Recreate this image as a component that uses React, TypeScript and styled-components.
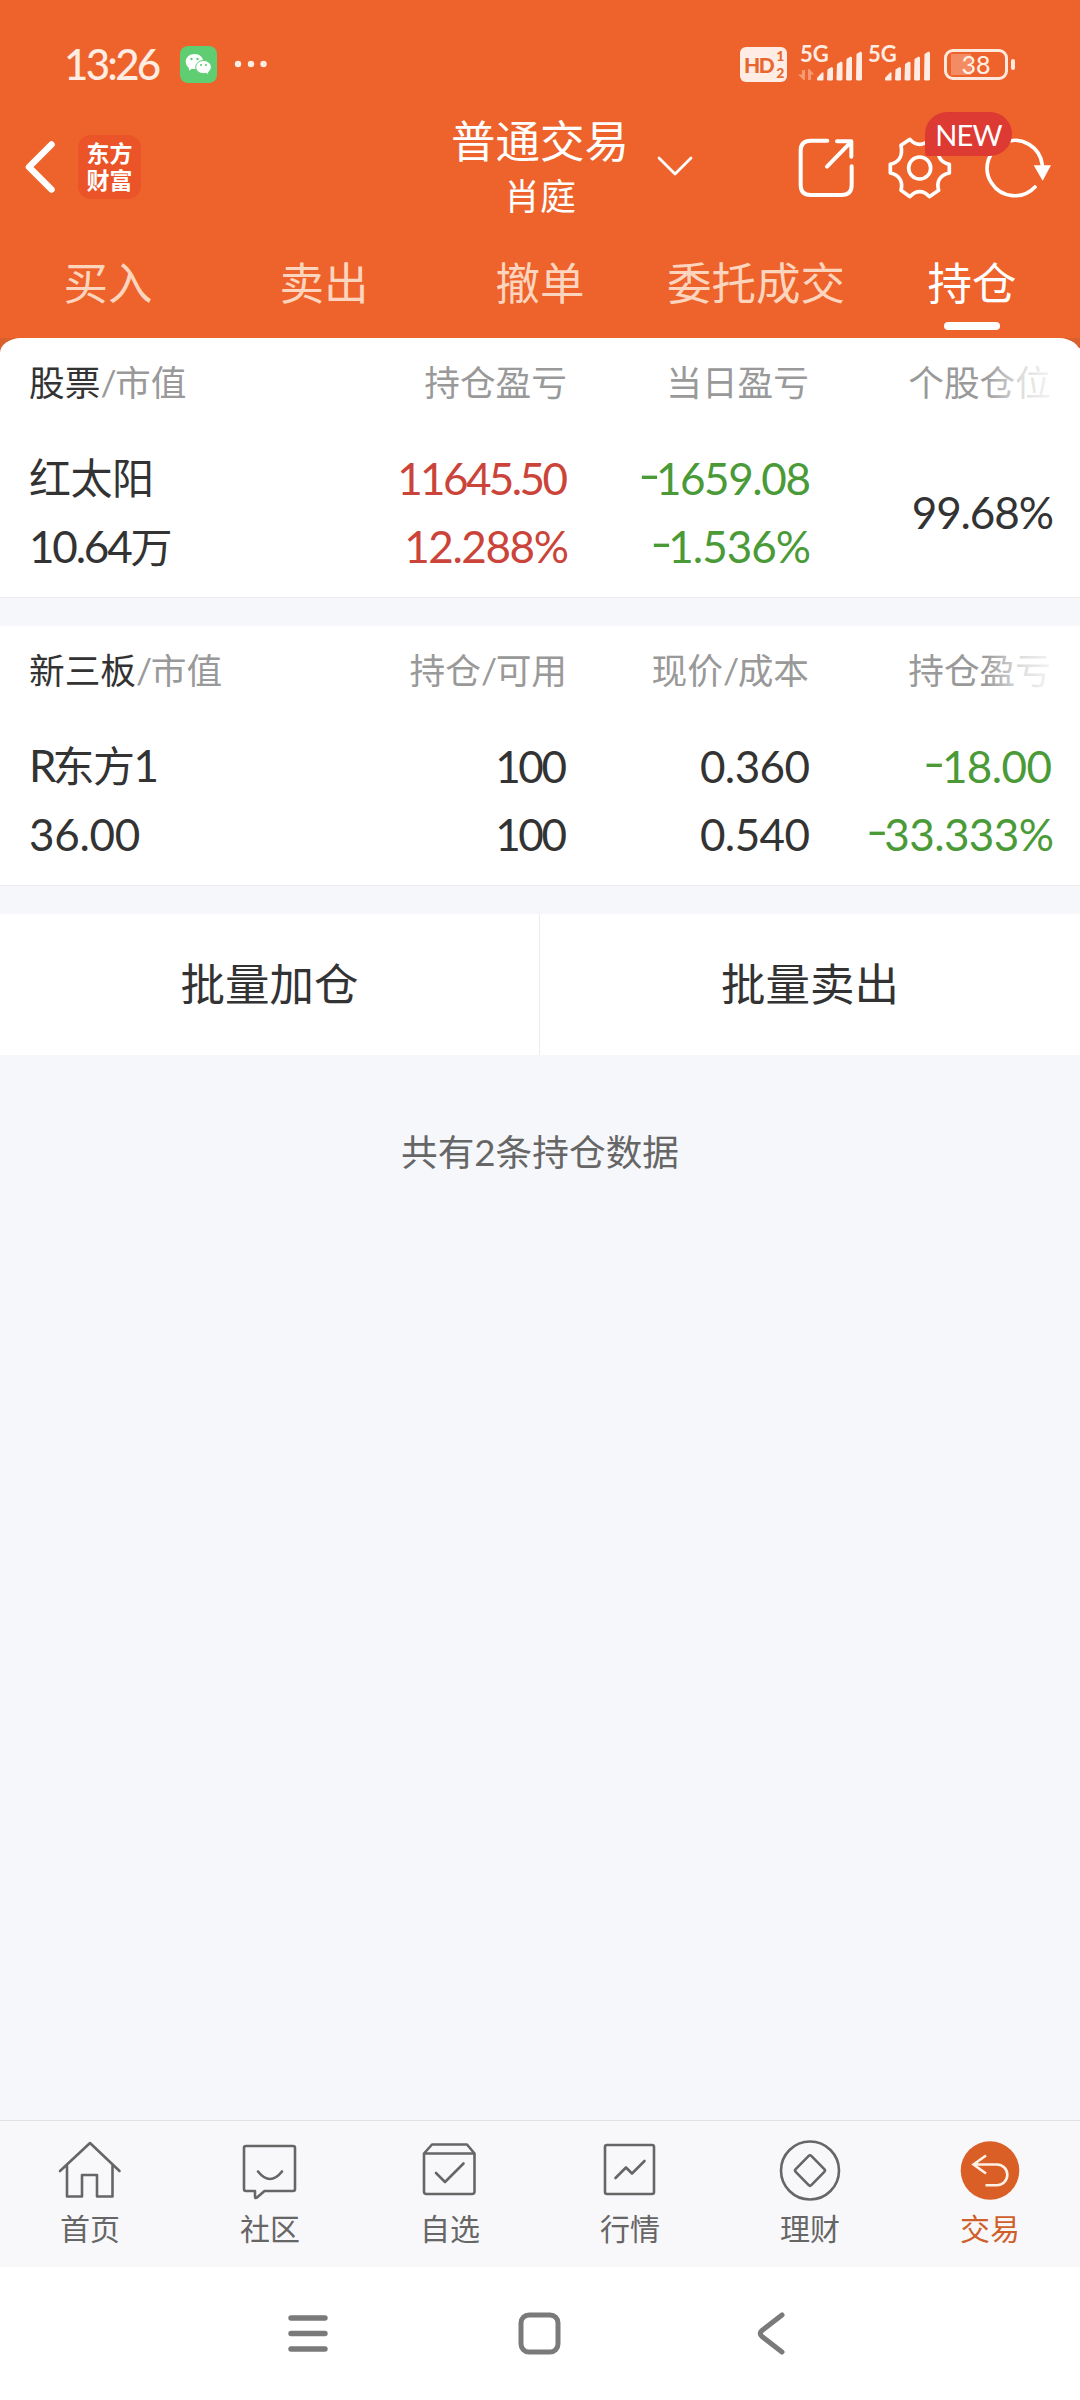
import React from 'react';
import styled, { createGlobalStyle } from 'styled-components';

const GlobalStyle = createGlobalStyle`
  * { box-sizing: border-box; }
  body {
    margin: 0;
    background: #f6f7fa;
    font-family: Lato, "Noto Sans CJK SC", sans-serif;
    color: #333;
  }
  svg { display: block; flex: none; overflow: visible; }
`;

const Screen = styled.div`
  width: 1080px;
  height: 2400px;
  display: flex;
  flex-direction: column;
  background: #f6f7fa;
  overflow: hidden;
`;

const Header = styled.header`
  height: 338px;
  flex: none;
  display: flex;
  flex-direction: column;
  background: #ed632b;
  color: #fff;
`;

/* ---------- status bar ---------- */

const StatusBar = styled.div`
  height: 110px;
  padding: 18px 72px 0 64px;
  display: flex;
  align-items: center;
  color: #ffece2;
`;

const Clock = styled.span`
  width: 116px;
  font-size: 42px;
  font-weight: 500;
  letter-spacing: -2.7px;
  line-height: 50px;
  white-space: nowrap;
`;

const Spacer = styled.div`
  flex: 1;
`;

const HdBadge = styled.div`
  width: 47px;
  height: 35px;
  margin-right: 11px;
  padding-left: 4px;
  display: flex;
  align-items: center;
  border-radius: 6px;
  background: #ffece4;
  color: #e8672f;
  font-size: 21px;
  font-weight: 900;
  letter-spacing: -1.5px;
`;

const HdLines = styled.div`
  display: flex;
  flex-direction: column;
  font-size: 14px;
  line-height: 17px;
  padding-left: 3px;
  letter-spacing: 0;
`;

const SignalBox = styled.div<{ $gap: number }>`
  position: relative;
  width: 64px;
  height: 35px;
  margin-right: ${(p) => p.$gap}px;
`;

const SignalLabel = styled.span`
  position: absolute;
  left: 2px;
  top: -4px;
  font-size: 22px;
  line-height: 22px;
  font-weight: 700;
`;

const Battery = styled.div`
  position: relative;
  width: 64px;
  height: 31px;
  display: flex;
  align-items: center;
  justify-content: center;
  border: 3px solid #ffe9df;
  border-radius: 9px;
  background: linear-gradient(#f38c62, #f38c62) 4px 2px / 20px 21px no-repeat;
  font-size: 25px;
  font-weight: 500;
  line-height: 25px;

  &::after {
    content: '';
    position: absolute;
    left: 64px;
    top: 7px;
    width: 4px;
    height: 11px;
    border-radius: 2px;
    background: #ffe9df;
  }
`;

/* ---------- title bar ---------- */

const TitleBar = styled.div`
  height: 120px;
  padding: 0 28px 0 24px;
  display: grid;
  grid-template-columns: 380px 1fr 376px;
  align-items: center;
`;

const TitleLeft = styled.div`
  display: flex;
  align-items: center;
  gap: 22px;
  padding-bottom: 6px;
`;

const AppLogo = styled.div`
  width: 63px;
  height: 64px;
  padding-bottom: 1px;
  display: flex;
  flex-direction: column;
  align-items: center;
  justify-content: center;
  border-radius: 13px;
  background: #ea5428;
  font-size: 23px;
  font-weight: 700;
  line-height: 27px;
`;

const TitleCenter = styled.div`
  display: flex;
  justify-content: center;
  align-items: center;
  position: relative;
`;

const TitleText = styled.div`
  display: flex;
  flex-direction: column;
  align-items: center;
  padding-bottom: 6px;
  white-space: nowrap;
`;

const Title = styled.h1`
  margin: 0;
  font-size: 44.5px;
  font-weight: 400;
  line-height: 58px;
`;

const Subtitle = styled.div`
  font-size: 36px;
  line-height: 52px;
`;

const TitleArrow = styled.span`
  position: absolute;
  right: -17px;
  top: 44px;
`;

const TitleRight = styled.div`
  display: flex;
  align-items: center;
  justify-content: flex-end;
  padding-bottom: 5px;
`;

const IconSlot = styled.div<{ $ml?: number }>`
  position: relative;
  margin-left: ${(p) => p.$ml ?? 0}px;
`;

const NewBadge = styled.span`
  position: absolute;
  left: 39px;
  top: -22px;
  z-index: 1;
  width: 87px;
  height: 44px;
  border-radius: 22px 22px 22px 3px;
  background: #dd3a34;
  font-size: 29px;
  line-height: 45px;
  letter-spacing: -0.8px;
  text-align: center;
`;

/* ---------- tabs ---------- */

const Tabs = styled.nav`
  height: 108px;
  display: grid;
  grid-template-columns: repeat(5, 1fr);
`;

const Tab = styled.div<{ $active?: boolean }>`
  display: flex;
  flex-direction: column;
  align-items: center;
  padding-top: 20px;
  font-size: 44.5px;
  line-height: 66px;
  color: ${(p) => (p.$active ? '#fff' : '#fdd5bf')};

  &::after {
    content: '';
    width: 56px;
    height: 8px;
    margin-top: 6px;
    border-radius: 4px;
    background: ${(p) => (p.$active ? '#fff' : 'transparent')};
  }
`;

/* ---------- holdings ---------- */

const Backdrop = styled.div`
  background: linear-gradient(#d9602c, #d9602c) top / 100% 14px no-repeat;
`;

const Panel = styled.section<{ $rounded?: boolean }>`
  height: 260px;
  padding: 0 29px;
  background: #fff;
  border-bottom: 1px solid #ebecee;
  border-radius: ${(p) => (p.$rounded ? '21px 21px 0 0 / 15px 15px 0 0' : '0')};
  margin-bottom: 28px;
`;

const Row = styled.div`
  display: grid;
  grid-template-columns: 538px 242px 242px;
`;

const HeadRow = styled(Row)`
  position: relative;
  height: 90px;
  align-items: center;
  font-size: 35.7px;
  line-height: 54px;
  color: #999;

  &::after {
    content: '';
    position: absolute;
    right: -29px;
    top: 10px;
    bottom: 0;
    width: 96px;
    background: linear-gradient(90deg, rgba(255, 255, 255, 0), rgba(255, 255, 255, 0.68) 40%, rgba(255, 255, 255, 0.9) 72%, #fff);
  }
`;

const SplitCell = styled.div`
  display: flex;
  justify-content: space-between;
`;

const HeadCell = styled.div`
  text-align: right;
  white-space: nowrap;
`;

const Strong = styled.span`
  color: #333;
`;

const Slash = styled.span`
  letter-spacing: -1.5px;
`;

const BodyRow = styled(Row)`
  padding-top: 15px;
`;

const Stack = styled.div<{ $left?: boolean }>`
  display: flex;
  flex-direction: column;
  justify-content: center;
  align-items: ${(p) => (p.$left ? 'flex-start' : 'flex-end')};
`;

const tones = { dark: '#333', red: '#cb4439', green: '#4a9a38' };
type Tone = keyof typeof tones;

const Value = styled.span<{ $tone?: Tone; $ls?: number; $hang?: number }>`
  font-size: 44px;
  line-height: 68px;
  white-space: nowrap;
  color: ${(p) => tones[p.$tone ?? 'dark']};
  letter-spacing: ${(p) => p.$ls ?? 0}px;
  margin-right: ${(p) => -(p.$ls ?? 0) - (p.$hang ?? 0)}px;
`;

const Minus = styled.span`
  display: inline-block;
  transform: translateY(-4px) scaleX(1.4);
`;

const Han = styled.span<{ $ls?: number }>`
  font-size: 42px;
  letter-spacing: ${(p) => p.$ls ?? 0}px;
`;

/* ---------- actions ---------- */

const Actions = styled.div`
  height: 141px;
  flex: none;
  display: grid;
  grid-template-columns: 539px 541px;
  background: #fff;
`;

const Action = styled.button`
  border: 0;
  padding: 0 0 6px;
  background: none;
  color: #333;
  font: inherit;
  font-size: 44.5px;

  & + & {
    border-left: 1px solid #ececee;
  }
`;

const Summary = styled.p`
  flex: 1;
  margin: 0;
  padding-top: 70px;
  text-align: center;
  font-size: 36.7px;
  line-height: 54px;
  color: #666;
`;

/* ---------- bottom bars ---------- */

const BottomNav = styled.nav`
  height: 147px;
  flex: none;
  display: grid;
  grid-template-columns: repeat(6, 1fr);
  border-top: 1px solid #dfe2e5;
  background: #f8f8fa;
`;

const NavItem = styled.div<{ $active?: boolean }>`
  display: flex;
  flex-direction: column;
  align-items: center;
  padding-top: 19px;
  font-size: 30px;
  line-height: 49px;
  color: ${(p) => (p.$active ? '#cf5f2b' : '#666')};
`;

const SystemNav = styled.div`
  height: 133px;
  flex: none;
  display: flex;
  align-items: center;
  justify-content: center;
  gap: 188px;
  background: #fff;
`;

function Wechat() {
  return (
    <svg width="37" height="37" viewBox="0 0 37 37">
      <rect width="37" height="37" rx="8" fill="#5fce72" />
      <path d="M14.500 8C9.500 8 5.700 11.500 5.700 15.800c0 2.400 1.200 4.500 3.100 5.900L9 24.500l3-1.700c.9.200 1.700.3 2.600.3 5 0 8.800-3.200 8.800-7.300C23.400 11.500 19.500 8 14.500 8z" fill="#fff" />
      <path d="M23.500 14.500c-4.300 0-7.700 2.900-7.700 6.600s3.400 6.500 7.700 6.500c.8 0 1.600-.1 2.300-.3l3 1.400-.4-2.500c1.800-1.200 2.900-3 2.900-5.100 0-3.700-3.500-6.600-7.800-6.600z" fill="#fff" stroke="#5fce72" strokeWidth="1" />
      <circle cx="11.500" cy="13" r="1.200" fill="#5fce72" />
      <circle cx="17.500" cy="13" r="1.200" fill="#5fce72" />
      <circle cx="21" cy="19" r="1.100" fill="#5fce72" />
      <circle cx="26" cy="19" r="1.100" fill="#5fce72" />
    </svg>
  );
}

const DotsSvg = styled.svg`
  margin-left: 17px;
`;

function Dots() {
  return (
    <DotsSvg width="34" height="8" viewBox="0 0 34 8" fill="#ffece2">
      <circle cx="4" cy="4" r="3.200" />
      <circle cx="17" cy="4" r="3.200" />
      <circle cx="29.500" cy="4" r="3.200" />
    </DotsSvg>
  );
}

function Signal({ data, gap }: { data?: boolean; gap: number }) {
  return (
    <SignalBox $gap={gap}>
      <SignalLabel>5G</SignalLabel>
      <svg width="64" height="35" viewBox="0 0 64 35">
        {data && (
          <g fill="#f59a74">
            <path d="M4 23h3v10H5.500L0 27.500h4zM10 33V22h1.500L16 27.500h-3V33z" />
          </g>
        )}
        <g fill="#ffece4">
          <path d="M19 32.500v-1.500l5-5.500h1.500v7a1 1 0 0 1-1 1H20a1 1 0 0 1-1-1z" />
          <path d="M29.500 22.500l4-2.500 1.500 1v11.500l-1 1h-4l-1-1z" />
          <path d="M39 17l4-2.500 1.500 1v17l-1 1h-4l-1-1z" />
          <path d="M48.500 12l4-2.500 1.500 1v22l-1 1h-4l-1-1z" />
          <path d="M58.500 7l4-2.500 1.500 1v27l-1 1h-4l-1-1z" />
        </g>
      </svg>
    </SignalBox>
  );
}

function BackIcon() {
  return (
    <svg width="32" height="52" viewBox="0 0 32 52" fill="none" stroke="#fff" strokeWidth="6.500" strokeLinecap="round" strokeLinejoin="round">
      <path d="M27.500 3.500L5 26l22.500 22.500" />
    </svg>
  );
}

function ChevronDown() {
  return (
    <svg width="36" height="20" viewBox="0 0 36 20" fill="none" stroke="#fff" strokeWidth="2.800" strokeLinecap="round" strokeLinejoin="round">
      <path d="M2 2l16 16L34 2" />
    </svg>
  );
}

function ShareIcon() {
  return (
    <svg width="56" height="68" viewBox="294 339 168 204" fill="none" stroke="#fff" strokeWidth="12" strokeLinecap="round" strokeLinejoin="round">
      <path d="M382 359h-50q-30 0-30 30v103q0 30 30 30h93q30 0 30-30v-56" />
      <path d="M381 437l73-75M411 361h43v46" />
    </svg>
  );
}

function GearIcon() {
  return (
    <svg width="68" height="68" viewBox="560 339 204 204" fill="none" stroke="#fff" strokeWidth="11" strokeLinejoin="round">
      <path d="M632 355Q645 370 661 370Q677 370 690 355L718 373C712 403 722 424 750 430V456C722 462 710 482 718 508L690 527Q677 512 661 512Q645 512 632 527L605 508C612 482 600 462 573 456V430C600 424 611 403 605 373Z" />
      <circle cx="661" cy="441" r="33" />
    </svg>
  );
}

function RefreshIcon() {
  return (
    <svg width="68" height="68" viewBox="853 339 204 204" fill="none" stroke="#fff" strokeWidth="11" strokeLinecap="round">
      <path d="M1006 498A83 83 0 1 1 1028 432" />
      <path d="M1002 433h52l-25 46z" fill="#fff" stroke="none" />
    </svg>
  );
}

const navShapes: Record<string, React.ReactNode> = {
  首页: <path d="M2 31L32 3l29.500 28M9 26v30.500h15V35h15v21.500h15.500V26" />,
  社区: (
    <>
      <path d="M8 6h47q2 0 2 2v41q0 2-2 2H26.500L19 57.500q-2 1.500-2-1V51H8q-2 0-2-2V8q0-2 2-2z" />
      <path d="M20 31.500q12 15 24 0" />
    </>
  ),
  自选: (
    <>
      <path d="M6 13.500l8-9h35l7.500 9v38q0 2.500-2.500 2.500H8.500Q6 54 6 51.500zM6 13.500h50.500" />
      <path d="M18 33l9 9 18.500-18.500" />
    </>
  ),
  行情: (
    <>
      <rect x="7" y="5" width="49" height="49" rx="2" />
      <path d="M17.500 38L28 27.500l6 6 12.500-12.500" />
    </>
  ),
  理财: (
    <>
      <circle cx="32" cy="30.500" r="29" />
      <path d="M30.700 15.900q1.300-1.300 2.600 0l13 13.300q1.300 1.300 0 2.600l-13 13.300q-1.300 1.300-2.600 0l-13-13.300q-1.300-1.300 0-2.600z" />
    </>
  ),
  交易: (
    <>
      <circle cx="32" cy="30.500" r="29.300" fill="#d95f27" stroke="none" />
      <path d="M28 15.500L15.500 24.500 28 33.500M15.500 24.500H39a10.300 10.300 0 0 1 0 20.700H27.500" stroke="#fff0e6" strokeLinejoin="miter" strokeLinecap="butt" />
    </>
  ),
};

function App() {
  return (
    <>
      <GlobalStyle />
      <Screen>
        <Header>
          <StatusBar>
            <Clock>13:26</Clock>
            <Wechat />
            <Dots />
            <Spacer />
            <HdBadge>
              <span>HD</span>
              <HdLines>
                <span>1</span>
                <span>2</span>
              </HdLines>
            </HdBadge>
            <Signal data gap={4} />
            <Signal gap={14} />
            <Battery>38</Battery>
          </StatusBar>

          <TitleBar>
            <TitleLeft>
              <BackIcon />
              <AppLogo>
                <span>东方</span>
                <span>财富</span>
              </AppLogo>
            </TitleLeft>
            <TitleCenter>
              <TitleText>
                <Title>普通交易</Title>
                <Subtitle>肖庭</Subtitle>
              </TitleText>
              <TitleArrow>
                <ChevronDown />
              </TitleArrow>
            </TitleCenter>
            <TitleRight>
              <IconSlot>
                <ShareIcon />
              </IconSlot>
              <IconSlot $ml={32}>
                <GearIcon />
                <NewBadge>NEW</NewBadge>
              </IconSlot>
              <IconSlot $ml={30}>
                <RefreshIcon />
              </IconSlot>
            </TitleRight>
          </TitleBar>

          <Tabs>
            <Tab>买入</Tab>
            <Tab>卖出</Tab>
            <Tab>撤单</Tab>
            <Tab>委托成交</Tab>
            <Tab $active>持仓</Tab>
          </Tabs>
        </Header>

        <Backdrop>
          <Panel $rounded>
            <HeadRow>
              <SplitCell>
                <span><Strong>股票</Strong><Slash>/</Slash>市值</span>
                <span>持仓盈亏</span>
              </SplitCell>
              <HeadCell>当日盈亏</HeadCell>
              <HeadCell>个股仓位</HeadCell>
            </HeadRow>
            <BodyRow>
              <SplitCell>
                <Stack $left>
                  <Value><Han $ls={-0.5}>红太阳</Han></Value>
                  <Value $ls={-2.2}>10.64<Han>万</Han></Value>
                </Stack>
                <Stack>
                  <Value $tone="red" $ls={-2.6} $hang={1}>11645.50</Value>
                  <Value $tone="red" $ls={-1.4} $hang={2}>12.288%</Value>
                </Stack>
              </SplitCell>
              <Stack>
                <Value $tone="green" $ls={-1.4} $hang={2}><Minus>-</Minus>1659.08</Value>
                <Value $tone="green" $ls={-1} $hang={2}><Minus>-</Minus>1.536%</Value>
              </Stack>
              <Stack>
                <Value $ls={-1.1} $hang={3}>99.68%</Value>
              </Stack>
            </BodyRow>
          </Panel>
        </Backdrop>

        <Panel>
          <HeadRow>
            <SplitCell>
              <span><Strong>新三板</Strong><Slash>/</Slash>市值</span>
              <span>持仓<Slash>/</Slash>可用</span>
            </SplitCell>
            <HeadCell>现价<Slash>/</Slash>成本</HeadCell>
            <HeadCell>持仓盈亏</HeadCell>
          </HeadRow>
          <BodyRow>
            <SplitCell>
              <Stack $left>
                <Value $ls={-4}>R<Han $ls={-1.6}>东方</Han>1</Value>
                <Value $ls={-0.3}>36.00</Value>
              </Stack>
              <Stack>
                <Value $ls={-2.4}>100</Value>
                <Value $ls={-2.4}>100</Value>
              </Stack>
            </SplitCell>
            <Stack>
              <Value $ls={-0.6} $hang={1}>0.360</Value>
              <Value $ls={-0.6} $hang={1}>0.540</Value>
            </Stack>
            <Stack>
              <Value $tone="green" $ls={-0.6} $hang={1}><Minus>-</Minus>18.00</Value>
              <Value $tone="green" $ls={-0.6} $hang={3}><Minus>-</Minus>33.333%</Value>
            </Stack>
          </BodyRow>
        </Panel>

        <Actions>
          <Action>批量加仓</Action>
          <Action>批量卖出</Action>
        </Actions>

        <Summary>共有2条持仓数据</Summary>

        <BottomNav>
          {['首页', '社区', '自选', '行情', '理财', '交易'].map((name) => (
            <NavItem key={name} $active={name === '交易'}>
              <svg width="64" height="64" viewBox="0 0 64 64" fill="none" stroke="#666" strokeWidth="2.600" strokeLinecap="round" strokeLinejoin="round">
                {navShapes[name]}
              </svg>
              <span>{name}</span>
            </NavItem>
          ))}
        </BottomNav>

        <SystemNav>
          <svg width="44" height="44" viewBox="0 0 44 44" stroke="#7a7a7a" strokeWidth="5.400" strokeLinecap="round">
            <path d="M5 6h34M5 21.500h34M5 37h34" />
          </svg>
          <svg width="44" height="44" viewBox="0 0 44 44" fill="none" stroke="#7a7a7a" strokeWidth="5">
            <rect x="3" y="3" width="37" height="37" rx="8" />
          </svg>
          <svg width="44" height="44" viewBox="0 0 44 44" fill="none" stroke="#7a7a7a" strokeWidth="5" strokeLinecap="round" strokeLinejoin="round">
            <path d="M32 3L12 18.500q-3.500 3 0 6l20 15.500" />
          </svg>
        </SystemNav>
      </Screen>
    </>
  );
}

export default App;
